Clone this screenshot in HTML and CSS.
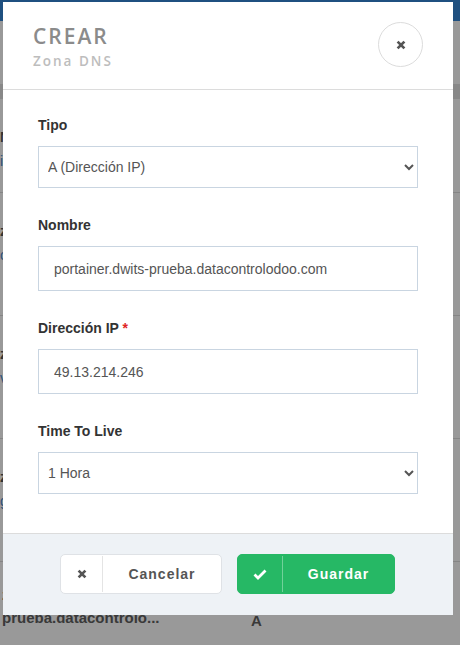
FILE: index.html
```html
<!DOCTYPE html>
<html lang="es">
<head>
<meta charset="utf-8">
<title>Crear Zona DNS</title>
<link rel="stylesheet" href="styles.css">
</head>
<body>
<div class="page">
  <div class="topbar"></div>
  <div class="content">
    <div class="table">
      <div class="thead"></div>
      <div class="row row-first"><span class="cell-a">N</span><span class="cell-b">i</span></div>
      <div class="row"><span class="cell-a">z</span><span class="cell-b">c</span></div>
      <div class="row"><span class="cell-a">z</span><span class="cell-b">v</span></div>
      <div class="row"><span class="cell-a">z</span><span class="cell-b">g</span></div>
      <div class="row row-last">
        <div class="cell-name">
          <span class="line">z</span>
          <span class="line">prueba.datacontrolo...</span>
        </div>
        <div class="cell-type">A</div>
      </div>
    </div>
  </div>
</div>
<div class="overlay"></div>

<div class="modal">
  <div class="modal-header">
    <div class="title-block">
      <div class="title">CREAR</div>
      <div class="subtitle">Zona DNS</div>
    </div>
    <button class="close-btn" type="button" aria-label="Cerrar">
      <svg width="10" height="10" viewBox="0 0 10 10"><path d="M1.6 1.6 L8.4 8.4 M8.4 1.6 L1.6 8.4" stroke="#555" stroke-width="2.7" stroke-linecap="butt"/></svg>
    </button>
  </div>
  <div class="modal-body">
    <div class="group">
      <label class="label">Tipo</label>
      <select class="control select">
        <option>A (Dirección IP)</option>
      </select>
    </div>
    <div class="group">
      <label class="label">Nombre</label>
      <input class="control input" type="text" value="portainer.dwits-prueba.datacontrolodoo.com">
    </div>
    <div class="group">
      <label class="label">Dirección IP <span class="req">*</span></label>
      <input class="control input" type="text" value="49.13.214.246">
    </div>
    <div class="group">
      <label class="label">Time To Live</label>
      <select class="control select">
        <option>1 Hora</option>
      </select>
    </div>
  </div>
  <div class="modal-footer">
    <button class="btn btn-cancel" type="button">
      <span class="btn-icon">
        <svg width="10" height="10" viewBox="0 0 10 10"><path d="M1.6 1.6 L8.4 8.4 M8.4 1.6 L1.6 8.4" stroke="#555" stroke-width="2.7"/></svg>
      </span>
      <span class="btn-text">Cancelar</span>
    </button>
    <button class="btn btn-save" type="button">
      <span class="btn-icon">
        <svg width="14" height="11" viewBox="0 0 14 11"><path d="M1.5 5.6 L5 9 L12.5 1.6" stroke="#fff" stroke-width="2.8" fill="none"/></svg>
      </span>
      <span class="btn-text">Guardar</span>
    </button>
  </div>
</div>
</body>
</html>
```

FILE: styles.css
```css
* { box-sizing: border-box; }

html, body {
  margin: 0;
  padding: 0;
  width: 460px;
  height: 645px;
  overflow: hidden;
  font-family: "Liberation Sans", Arial, sans-serif;
  background: #fff;
}

.page {
  width: 460px;
  height: 645px;
  overflow: hidden;
}

.topbar {
  height: 21px;
  background: #3486d6;
}

.content {
  padding-top: 63px;
}

.thead {
  height: 15px;
  background: #e3e3e3;
}

.row {
  height: 123px;
  border-top: 1px solid #dedede;
  display: flex;
  flex-direction: column;
  padding: 30px 0 0 0;
  font-size: 14px;
  color: #555;
  font-weight: bold;
}

.row-first {
  height: 93px;
  border-top: none;
}

.cell-b { color: #4a86c8; font-weight: normal; margin-top: 8px; }

.row-last {
  height: 85px;
  flex-direction: row;
  padding-top: 24px;
}

.cell-name {
  width: 248px;
  display: flex;
  flex-direction: column;
  gap: 6px;
  padding-left: 2px;
  font-size: 15px;
  color: #606060;
}

.cell-type {
  padding-top: 26px;
  font-size: 15px;
  padding-left: 3px;
  color: #606060;
}

.overlay {
  position: absolute;
  inset: 0;
  background: rgba(0, 0, 0, 0.4);
}

.modal {
  position: absolute;
  left: 3px;
  top: 2px;
  width: 450px;
  height: 613px;
  background: #fff;
  display: flex;
  flex-direction: column;
}

.modal-header {
  height: 88px;
  border-bottom: 1px solid #dcdcdc;
  padding: 20px 30px 0 30px;
  display: flex;
  justify-content: space-between;
  align-items: flex-start;
}

.title-block {
  margin-top: 2px;
}

.title {
  font-family: "Open Sans", sans-serif;
  font-weight: 600;
  font-size: 21px;
  line-height: 24px;
  letter-spacing: 2px;
  color: #8b8b8b;
}

.subtitle {
  margin-top: 4px;
  font-family: "Open Sans", sans-serif;
  font-weight: 600;
  font-size: 13.5px;
  line-height: 18px;
  letter-spacing: 2px;
  color: #bdbdbd;
}

.close-btn {
  width: 45px;
  height: 45px;
  border-radius: 50%;
  border: 1px solid #dcdcdc;
  background: #fff;
  padding: 0;
  display: flex;
  align-items: center;
  justify-content: center;
}

.modal-body {
  flex: 1;
  padding: 25px 35px 0 35px;
}

.group {
  display: flex;
  flex-direction: column;
  margin-bottom: 27px;
}

.label {
  font-size: 14px;
  line-height: 20px;
  font-weight: bold;
  color: #333;
  margin-bottom: 11px;
}

.req { color: #e02424; }

.control {
  width: 380px;
  border: 1px solid #c9d5e1;
  border-radius: 0;
  background: #fff;
  font-family: "Liberation Sans", Arial, sans-serif;
  font-size: 14px;
  color: #555;
  outline: none;
}

.select {
  height: 42px;
  padding: 0 5px;
}

.input {
  height: 45px;
  padding: 0 15px;
}

.modal-footer {
  height: 82px;
  border-top: 1px solid #dcdcdc;
  background: #eef2f6;
  display: flex;
  justify-content: center;
  align-items: flex-start;
  padding-top: 20px;
  padding-right: 1px;
  gap: 15px;
}

.btn {
  height: 40px;
  border-radius: 5px;
  display: flex;
  align-items: center;
  padding: 0;
  font-family: "Liberation Sans", Arial, sans-serif;
  font-size: 14px;
  font-weight: bold;
  letter-spacing: 1px;
  cursor: pointer;
}

.btn-icon {
  height: 36px;
  display: flex;
  align-items: center;
  justify-content: center;
}

.btn-text {
  flex: 1;
  text-align: center;
}

.btn-cancel {
  width: 162px;
  background: #fff;
  border: 1px solid #dfe2e6;
  color: #555;
}

.btn-cancel .btn-icon {
  width: 42px;
  border-right: 1px solid #e4e4e4;
}

.btn-save {
  width: 158px;
  background: #26b865;
  border: 1px solid #26b865;
  color: #fff;
}

.btn-save .btn-icon {
  width: 45px;
  border-right: 1px solid rgba(255, 255, 255, 0.35);
}
```
